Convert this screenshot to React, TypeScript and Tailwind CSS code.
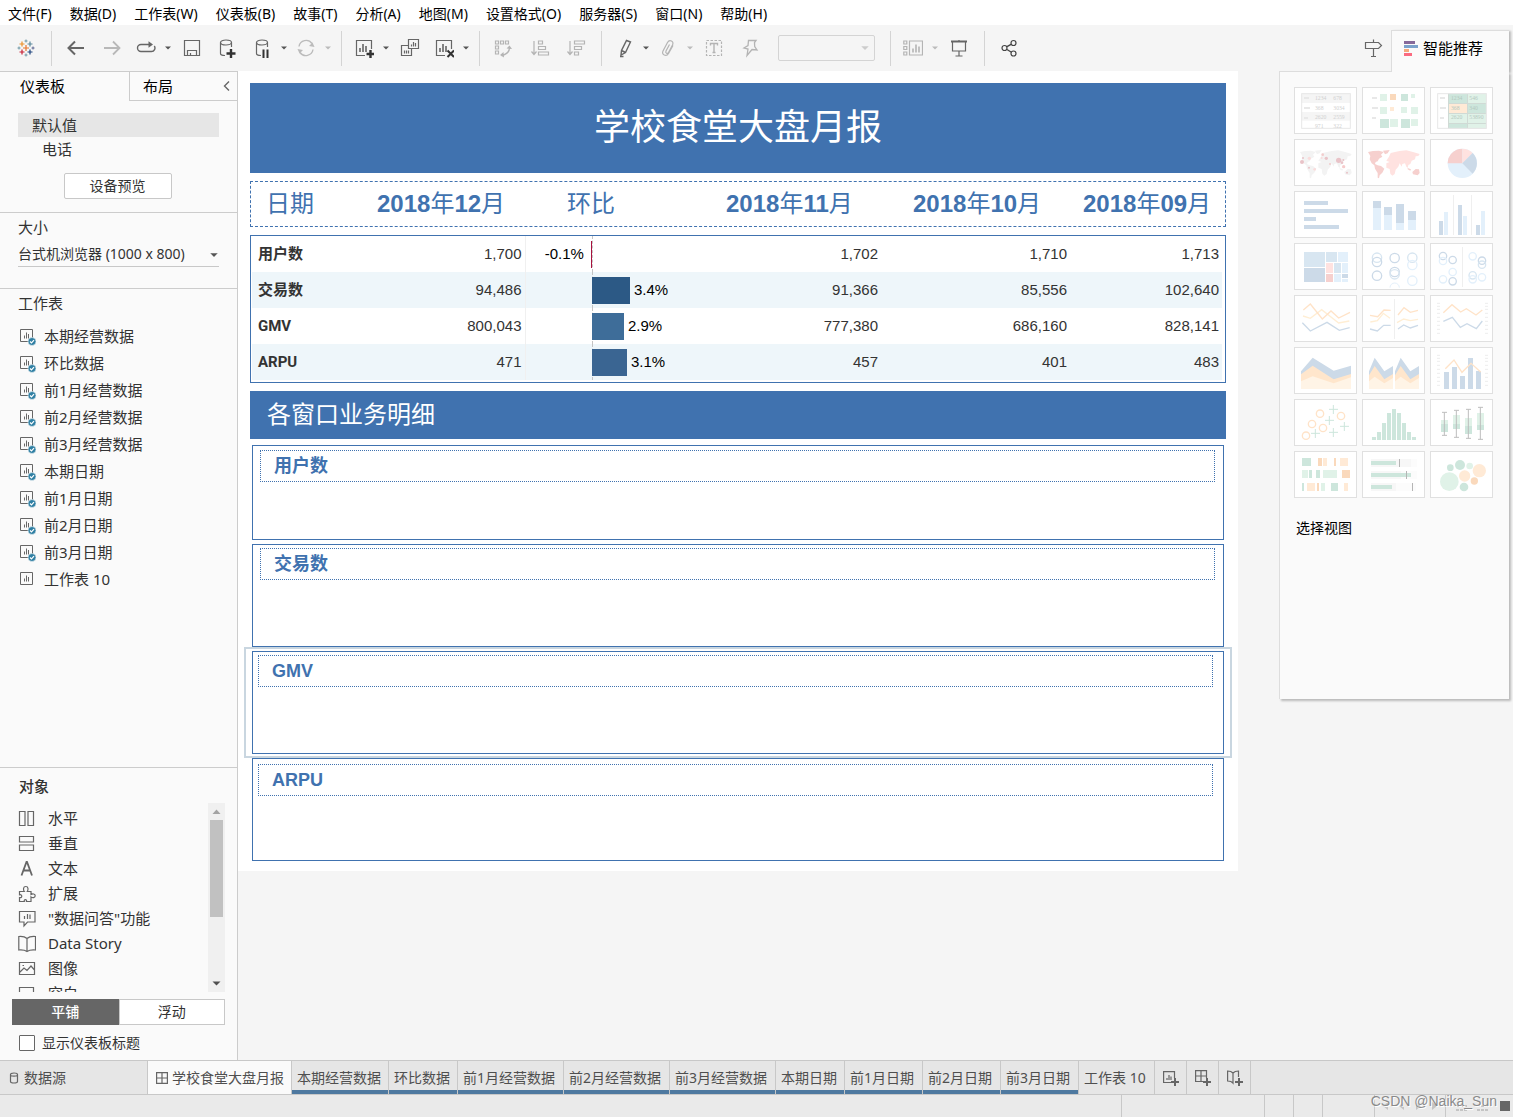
import React, { useState } from 'react';
import type { ReactNode } from 'react';

const MENUS = ['文件(F)', '数据(D)', '工作表(W)', '仪表板(B)', '故事(T)', '分析(A)', '地图(M)', '设置格式(O)', '服务器(S)', '窗口(N)', '帮助(H)'];

const SHEETS = ['本期经营数据', '环比数据', '前1月经营数据', '前2月经营数据', '前3月经营数据', '本期日期', '前1月日期', '前2月日期', '前3月日期', '工作表 10'];

const SHEET_TABS = [
  { name: '本期经营数据', width: 'w-[97px]' },
  { name: '环比数据', width: 'w-[69px]' },
  { name: '前1月经营数据', width: 'w-[106px]' },
  { name: '前2月经营数据', width: 'w-[106px]' },
  { name: '前3月经营数据', width: 'w-[106px]' },
  { name: '本期日期', width: 'w-[69px]' },
  { name: '前1月日期', width: 'w-[78px]' },
  { name: '前2月日期', width: 'w-[78px]' },
  { name: '前3月日期', width: 'w-[78px]' },
];

const ROWS = [
  { label: '用户数', current: '1,700', ratio: -0.1, m1: '1,702', m2: '1,710', m3: '1,713', color: '#a8123e' },
  { label: '交易数', current: '94,486', ratio: 3.4, m1: '91,366', m2: '85,556', m3: '102,640', color: '#2c5985' },
  { label: 'GMV', current: '800,043', ratio: 2.9, m1: '777,380', m2: '686,160', m3: '828,141', color: '#3e6d99' },
  { label: 'ARPU', current: '471', ratio: 3.1, m1: '457', m2: '401', m3: '483', color: '#3a6592' },
];

/* ---------- icons ---------- */

interface IconProps {
  children: ReactNode;
  color?: string;
  size?: string;
  box?: string;
}

function Icon({ children, color = '#666', size = 'w-5 h-5', box = '0 0 20 20' }: IconProps) {
  return (
    <svg viewBox={box} className={`${size} shrink-0`} fill="none" stroke={color} strokeWidth="1.2" aria-hidden="true">
      {children}
    </svg>
  );
}

const Bars = ({ x = 0, y = 0 }) => (
  <path d={`M${x} ${y}v-4M${x + 3} ${y}v-8M${x + 6} ${y}v-6`} strokeWidth="1.6" />
);

const LogoIcon = () => (
  <Icon size="w-6 h-6" box="0 0 24 24">
    <path d="M9 12h6M12 9v6" stroke="#e8762d" strokeWidth="1.2" />
    <path d="M5.5 8h5M8 5.5v5" stroke="#eb912b" strokeWidth="1.2" />
    <path d="M13.5 8h5M16 5.5v5" stroke="#59879b" strokeWidth="1.2" />
    <path d="M5.500 16h5M8 13.500v5" stroke="#c72035" strokeWidth="1.2" />
    <path d="M13.500 16h5M16 13.500v5" stroke="#1f447e" strokeWidth="1.2" />
    <path d="M10.500 5h3M12 3.500v3M10.500 19h3M12 17.500v3M3.500 12h3M5 10.500v3" stroke="#7199a6" strokeWidth="1" />
    <path d="M17.500 12h3M19 10.500v3" stroke="#5c6692" strokeWidth="1" />
  </Icon>
);

const BackIcon = () => <Icon><path d="M2.5 10H18M9 3.500l-6.500 6.500L9 16.500" strokeWidth="2" /></Icon>;
const ForwardIcon = () => <Icon color="#b8b8b8"><path d="M2 10h15.500M11 3.500l6.500 6.500L11 16.500" strokeWidth="1.800" /></Icon>;
const ReplayIcon = () => (
  <Icon>
    <path d="M14 6.500H5a3.500 3.500 0 0 0 0 7H15.500a3.500 3.500 0 0 0 2.800-5.500" strokeWidth="1.400" />
    <path d="M12.500 3.200L17 6.500l-4.500 3.300z" fill="#666" stroke="none" />
  </Icon>
);
const SaveIcon = () => <Icon><path d="M2.500 2.500h15v15h-15zM5.500 17.500v-5h9v5M8.500 17.500v-2.500" /></Icon>;
const DbPath = () => (
  <>
    <ellipse cx="8" cy="4.500" rx="5.500" ry="2.500" />
    <path d="M2.500 4.500v11c0 1.200 2 2 4.500 2M13.500 4.500V9" />
  </>
);
const DbAddIcon = () => <Icon><DbPath /><path d="M8.500 15.500h9M13 11v9" stroke="#333" strokeWidth="2.400" /></Icon>;
const DbPauseIcon = () => (
  <Icon>
    <g transform="translate(2 0)"><DbPath /></g>
    <path d="M11.500 11.500V20M15.500 11.500V20" stroke="#333" strokeWidth="2" />
  </Icon>
);
const RefreshIcon = () => (
  <Icon color="#bbb">
    <path d="M3 8.500a7.200 7.200 0 0 1 13-3M17 11.500a7.200 7.200 0 0 1-13 3" strokeWidth="1.400" />
    <path d="M18.500 9l-5.500-1 3.500-3.500zM1.500 11l5.500 1-3.500 3.500z" fill="#bbb" stroke="none" />
  </Icon>
);
const SheetAddIcon = () => (
  <Icon>
    <path d="M11 17.500H2.500v-15h15V11" /><Bars x={6} y={14} />
    <path d="M12.500 16h8M16.500 12v8" stroke="#333" strokeWidth="2.400" />
  </Icon>
);
const DuplicateIcon = () => (
  <Icon>
    <path d="M8.500 1.500h10v9h-10zM8.500 7.500h-7v10h10v-7" />
    <path d="M11.500 8.500V6.500M13.500 8.500V4M15.500 8.500V5M4.500 15.500v-3M6.500 15.500v-3M8.500 15.500v-3" />
  </Icon>
);
const ClearIcon = () => (
  <Icon>
    <path d="M11 17.500H2.500v-15h15V11" /><Bars x={6} y={14} />
    <path d="M13.500 12.500l6.500 6.500M20 12.500L13.500 19" stroke="#333" strokeWidth="2" />
  </Icon>
);
const SwapIcon = () => (
  <Icon color="#b4b4b4">
    <path d="M1.500 3h3v3h-3zM6.500 3h3v3h-3zM11.500 3h3v3h-3zM1.500 8h3v3h-3zM1.500 13h3v3h-3z" />
    <path d="M15.500 9.500c0 4-3 7-8 8" strokeWidth="1.400" />
    <path d="M12.500 10.500l3-3 2.500 3.500zM9.500 14l-3.500 3 4 2.500z" fill="#b4b4b4" stroke="none" />
  </Icon>
);
const SortAscIcon = () => (
  <Icon color="#b4b4b4">
    <path d="M4 3v13M1.500 13.500L4 16.500l2.500-3M8.500 3h4v3h-4zM8.500 8.500h7v3h-7zM8.500 14h10v3h-10z" />
  </Icon>
);
const SortDescIcon = () => (
  <Icon color="#b4b4b4">
    <path d="M4 3v13M1.500 13.500L4 16.500l2.500-3M8.500 3h10v3h-10zM8.500 8.500h7v3h-7zM8.500 14h4v3h-4z" />
  </Icon>
);
const PenIcon = () => (
  <Icon><path d="M12.500 2.500l4 1.500-5 10.500-4.500 2.500.5-4.500zM7.500 12.500l4 2M6 18.500h3.500" strokeWidth="1.400" /></Icon>
);
const ClipIcon = () => (
  <Icon color="#b4b4b4"><path d="M15 7.500l-4.500 8c-2 3.500-7.500 1.500-5.500-2.500L9.500 4.500c1.800-3.500 7-1.500 5 2.500l-4 7.500c-1 1.800-3.500.8-2.500-1.500L11.500 6.500" /></Icon>
);
const TextIcon = () => (
  <Icon color="#b4b4b4">
    <path d="M2.500 2.500h15v15h-15z" strokeDasharray="2.500 1.500" />
    <path d="M6.500 7.500v-2h7v2M10 5.500v9M8.500 14.500h3" strokeWidth="1.400" />
  </Icon>
);
const PinIcon = () => <Icon color="#b4b4b4"><path d="M8.500 2.500h7.500l-1.500 2 .2 4 2.300 3.500-5-.5L7 17.500l1-6.500-4-1 4-2.500z" strokeWidth="1.300" /></Icon>;
const LayoutIcon = () => (
  <Icon color="#b4b4b4">
    <path d="M.8 3h3v3h-3zM.8 8.500h3v3h-3zM.8 14h3v3h-3zM6.500 3h13v14h-13z" /><Bars x={10} y={14.5} />
  </Icon>
);
const PresentIcon = () => <Icon><path d="M2 3.500h16" strokeWidth="2" /><path d="M3.500 4v9h13V4M10 2v1M10 13v5M6.500 18h7" /></Icon>;
const ShareIcon = () => (
  <Icon color="#444">
    <circle cx="5.500" cy="10" r="2.500" /><circle cx="14.500" cy="5" r="2.500" /><circle cx="14.500" cy="15.500" r="2.500" />
    <path d="M8 8.700l4-2.300M8 11.500l4 2.500" strokeWidth="1.400" />
  </Icon>
);

const Caret = ({ color = '#555', size = 'w-2 h-2' }) => (
  <svg viewBox="0 0 8 8" className={`${size} shrink-0`} aria-hidden="true"><path d="M1 2.500h6L4 5.500z" fill={color} /></svg>
);

const SheetIcon = ({ checked }: { checked: boolean }) => (
  <Icon size="w-[18px] h-[18px]" box="0 0 18 18">
    <path d="M2.500 1.500h12v12h-12zM6.500 10.500V7.500M8.500 10.500V4.500M10.500 10.500V6" strokeWidth="1" />
    {checked && (
      <>
        <circle cx="14" cy="13.500" r="4" fill="#2f7fa3" stroke="#fafafa" strokeWidth=".6" />
        <path d="M12 13.500l1.500 1.500 2.500-2.800" stroke="#fff" strokeWidth="1.200" />
      </>
    )}
  </Icon>
);

const OBJECTS = [
  { name: '水平', icon: <path d="M1.500 1.500h5.500v14H1.500zM10 1.500h5.500v14H10z" /> },
  { name: '垂直', icon: <path d="M1.500 1.500h14V7h-14zM1.500 10h14v5.500h-14z" /> },
  { name: '文本', icon: <path d="M3.500 15.500L8.500 2h.5l5 13.500M5.500 10.500h7" strokeWidth="1.800" /> },
  { name: '扩展', icon: <path d="M1.500 6.500h4.800c-1.200-1.500-1.300-5 1.500-5s2.500 3.500 1.500 5H13v3c1.500-1 4.200-.8 4.200 1.300s-2.700 2.300-4.200 1.200v4.500H8.500c.8-2.500-3-2.500-2.200 0H1.500v-4c3 1 3-3.500 0-2.700z" /> },
  { name: '"数据问答"功能', icon: <path d="M1.500 1.500h15.500v10.500H9.500L6 16V12H1.500zM6.500 9V6M9.500 9V4M12 9V4.500" /> },
  { name: 'Data Story', icon: <path d="M.8 1.500c3.500-.3 6 0 8.200 2 2.200-2 4.700-2.300 8.500-2v13.500c-3.500-.3-6.300 0-8.500 1.500C6.800 15 4.300 14.700.8 15zM9 3.500v13" /> },
  { name: '图像', icon: <path d="M1.500 2.500h15v12h-15zM2 12l4-4 3 2.500 4-4.500 3.500 4M4.500 5.500h1.500" /> },
  { name: '空白', icon: <path d="M1.500 2.500h14v14h-14z" /> },
];

/* ---------- toolbar ---------- */

function Tool({ label, wide, children }: { label: string; wide?: boolean; children: ReactNode }) {
  return (
    <button type="button" aria-label={label} className={`${wide ? 'w-9' : 'w-8'} h-8 shrink-0 flex items-center justify-center`}>
      {children}
    </button>
  );
}

const Drop = ({ label, color }: { label: string; color?: string }) => (
  <button type="button" aria-label={label} className="w-3 h-8 shrink-0 flex items-center justify-center">
    <Caret color={color} />
  </button>
);

const Group = ({ children, last }: { children: ReactNode; last?: boolean }) => (
  <div className={`h-[35px] flex items-center pl-1.5 pr-[7px] ${last ? '' : 'border-r border-[#d4d4d4]'}`}>{children}</div>
);

function Toolbar() {
  return (
    <div className="h-[46px] flex items-center bg-[#f5f5f5] pl-0.5">
      <Group><Tool label="开始" wide><LogoIcon /></Tool></Group>
      <Group>
        <Tool label="撤消" wide><BackIcon /></Tool>
        <Tool label="重做" wide><ForwardIcon /></Tool>
        <Tool label="重播动画"><ReplayIcon /></Tool>
        <Drop label="重播选项" />
        <Tool label="保存" wide><SaveIcon /></Tool>
        <Tool label="新建数据源" wide><DbAddIcon /></Tool>
        <Tool label="暂停自动更新"><DbPauseIcon /></Tool>
        <Drop label="更新选项" />
        <Tool label="运行更新"><RefreshIcon /></Tool>
        <Drop label="刷新选项" color="#bbb" />
      </Group>
      <Group>
        <Tool label="新建工作表"><SheetAddIcon /></Tool>
        <Drop label="新建选项" />
        <Tool label="复制" wide><DuplicateIcon /></Tool>
        <Tool label="清除工作表"><ClearIcon /></Tool>
        <Drop label="清除选项" />
      </Group>
      <Group>
        <Tool label="交换行和列" wide><SwapIcon /></Tool>
        <Tool label="升序排序" wide><SortAscIcon /></Tool>
        <Tool label="降序排序" wide><SortDescIcon /></Tool>
      </Group>
      <Group>
        <Tool label="突出显示"><PenIcon /></Tool>
        <Drop label="突出显示选项" />
        <Tool label="组成员"><ClipIcon /></Tool>
        <Drop label="组选项" color="#bbb" />
        <Tool label="显示标记标签" wide><TextIcon /></Tool>
        <Tool label="固定轴" wide><PinIcon /></Tool>
        <div className="ml-2.5 mr-2 w-[97px] h-[26px] border border-[#d4d4d4] rounded-xs flex items-center pr-1">
          <select aria-label="适合" disabled className="flex-1 min-w-0 appearance-none" />
          <Caret color="#ccc" size="w-2.5 h-2.5" />
        </div>
      </Group>
      <Group>
        <Tool label="显示/隐藏卡"><LayoutIcon /></Tool>
        <Drop label="卡选项" color="#bbb" />
        <Tool label="演示模式" wide><PresentIcon /></Tool>
      </Group>
      <Group last><Tool label="共享" wide><ShareIcon /></Tool></Group>
    </div>
  );
}

/* ---------- left pane ---------- */

function Sidebar() {
  const [tiled, setTiled] = useState(true);
  return (
    <aside className="w-[238px] shrink-0 flex flex-col bg-[#fafafa] border-r border-[#ccc] text-[15px] text-[#333]">
      <div className="h-[30px] flex border-t border-[#ccc] text-black">
        <button type="button" className="w-[129px] pl-5 text-left">仪表板</button>
        <div className="flex-1 flex items-center justify-between border-l border-b border-[#ccc] pl-[13px] pr-1">
          <button type="button">布局</button>
          <button type="button" aria-label="折叠" className="flex">
            <Icon size="w-3 h-3" box="0 0 12 12"><path d="M8 1.500L3.500 6 8 10.500" strokeWidth="1.400" /></Icon>
          </button>
        </div>
      </div>

      <div className="pt-3 pb-[13px] px-[18px] flex flex-col">
        <button type="button" className="h-6 bg-[#e6e6e6] pl-3.5 text-left">默认值</button>
        <button type="button" className="h-6 mb-3 pl-6 text-left">电话</button>
        <button type="button" className="w-[108px] h-[26px] mr-0.5 self-center bg-white border border-[#c8c8c8] rounded-xs text-sm">
          设备预览
        </button>
      </div>

      <div className="border-t border-[#ccc] px-[18px] pb-[21px]">
        <label htmlFor="size" className="block h-[30px] leading-7">大小</label>
        <div className="h-6 flex items-center border-b border-[#c8c8c8] text-sm">
          <select id="size" className="flex-1 min-w-0 h-[22px] pb-0.5 appearance-none bg-transparent">
            <option>台式机浏览器 (1000 x 800)</option>
          </select>
          <Caret size="w-2.5 h-2.5" />
        </div>
      </div>

      <div className="flex-1 border-t border-[#ccc] px-[18px]">
        <h3 className="h-[30px] leading-7">工作表</h3>
        <ul className="mt-1">
          {SHEETS.map((s, i) => (
            <li key={s} className="h-[27px] flex items-center gap-2">
              <SheetIcon checked={i < 9} />
              <span>{s}</span>
            </li>
          ))}
        </ul>
      </div>

      <div className="border-t border-[#ccc] px-3 pb-[9px]">
        <h3 className="h-[35px] leading-[37px] pl-[7px] font-medium">对象</h3>
        <div className="flex h-[189px]">
          <ul className="flex-1 pt-[3px] pl-1.5 overflow-hidden">
            {OBJECTS.map(o => (
              <li key={o.name} className="h-[25px] flex items-center gap-3">
                <Icon size="w-[18px] h-[18px]" box="0 0 18 18">{o.icon}</Icon>
                <span>{o.name}</span>
              </li>
            ))}
          </ul>
          <div className="w-[17px] bg-[#f0f0f0] flex flex-col items-center justify-between py-1">
            <div className="flex flex-col items-center gap-1">
              <svg viewBox="0 0 9 9" className="w-[9px] h-[9px]"><path d="M.5 7h8l-4-4.500z" fill="#a3a3a3" /></svg>
              <div className="w-[13px] h-[97px] bg-[#c1c1c1]" />
            </div>
            <svg viewBox="0 0 9 9" className="w-[9px] h-[9px]"><path d="M.5 2.500h8l-4 4z" fill="#505050" /></svg>
          </div>
        </div>
        <div className="mt-[7px] h-[26px] flex text-sm text-[#333]">
          <button type="button" onClick={() => setTiled(true)} className={`flex-1 border ${tiled ? 'bg-[#666] border-[#666] text-white font-medium' : 'bg-white border-[#c8c8c8]'}`}>平铺</button>
          <button type="button" onClick={() => setTiled(false)} className={`flex-1 border ${tiled ? 'bg-white border-[#c8c8c8]' : 'bg-[#666] border-[#666] text-white font-medium'}`}>浮动</button>
        </div>
        <label className="mt-2.5 h-4 flex items-center gap-[7px] pl-[7px] text-sm">
          <input type="checkbox" className="appearance-none w-4 h-4 bg-white border border-[#666] rounded-[1px] checked:bg-[#666]" />
          显示仪表板标题
        </label>
      </div>
    </aside>
  );
}

/* ---------- dashboard ---------- */

function RatioCell({ ratio, color }: { ratio: number; color: string }) {
  const text = `${ratio.toFixed(1)}%`;
  return (
    <div className="h-9 flex text-black">
      <div className="w-[40%] flex items-center justify-end border-r border-dashed border-[#c4c4c4]">
        {ratio < 0 && (
          <>
            <span className="mr-[7px]">{text}</span>
            <span className="h-[27px]" style={{ width: 1, background: color }} />
          </>
        )}
      </div>
      {ratio > 0 && (
        <div className="flex-1 flex items-center gap-1 -ml-px">
          <span className="h-[27px]" style={{ width: Math.round(ratio * 11.2), background: color }} />
          <span>{text}</span>
        </div>
      )}
    </div>
  );
}

function DetailCard({ title, box, selected }: { title: string; box: string; selected?: boolean }) {
  return (
    <section className={`relative border border-[#4072af] ${box}`}>
      <h3 className="h-8 leading-[30px] border border-dotted border-[#4072af] pl-[13px] text-lg font-bold text-[#4072af]">{title}</h3>
      {selected && <div className="absolute -inset-x-[9px] -inset-y-[5px] border-2 border-[#c9d6e0] pointer-events-none" />}
    </section>
  );
}

function Month({ year, month }: { year: string; month: string }) {
  return (
    <span>
      {year}<span className="font-normal">年</span>{month}<span className="font-normal">月</span>
    </span>
  );
}

function Dashboard() {
  return (
    <div className="w-full max-w-[1000px] bg-white px-3 pt-3 pb-2.5 font-[family-name:'Liberation_Sans','Noto_Sans_CJK_SC',sans-serif]">
      <h1 className="h-[90px] flex items-center justify-center bg-[#4072af] text-white text-4xl">学校食堂大盘月报</h1>

      <div className="mt-2 h-[46px] grid grid-cols-[111fr_190fr_159fr_187fr_170fr_142fr] items-center pl-[15px] border border-dashed border-[#4072af] text-2xl font-bold text-[#4072af] whitespace-nowrap">
        <span className="font-normal">日期</span>
        <Month year="2018" month="12" />
        <span className="font-normal">环比</span>
        <Month year="2018" month="11" />
        <Month year="2018" month="10" />
        <Month year="2018" month="09" />
      </div>

      <div className="mt-2 border border-[#4072af] pb-0.5 pl-px pr-[3px] text-[15px] text-[#333]">
        <table className="w-full table-fixed">
          <colgroup>
            <col className="w-[108px]" />
            <col className="w-[165px]" />
            <col className="w-[169px]" />
            <col className="w-[187px]" />
            <col className="w-[189px]" />
            <col className="w-[152px]" />
          </colgroup>
          <tbody>
            {ROWS.map(r => (
              <tr key={r.label} className="h-9 even:bg-[#eef6fa]">
                <th scope="row" className="pl-1.5 text-left font-bold font-[family-name:Roboto,'Noto_Sans_CJK_SC',sans-serif]">{r.label}</th>
                <td className="pr-[3px] text-right">{r.current}</td>
                <td className="border-l border-[#f0f0f0]"><RatioCell ratio={r.ratio} color={r.color} /></td>
                <td className="pr-[3px] text-right">{r.m1}</td>
                <td className="pr-[3px] text-right">{r.m2}</td>
                <td className="pr-[3px] text-right">{r.m3}</td>
              </tr>
            ))}
          </tbody>
        </table>
      </div>

      <h2 className="mt-2 h-12 leading-[48px] pl-[17px] bg-[#4072af] text-white text-2xl">各窗口业务明细</h2>

      <div className="mt-1.5 mx-0.5 flex flex-col gap-1">
        <DetailCard title="用户数" box="h-[95px] pt-1 pl-[7px] pr-2" />
        <DetailCard title="交易数" box="h-[103px] pt-[3px] pl-[7px] pr-2" />
        <DetailCard title="GMV" box="h-[103px] pt-[3px] pl-[5px] pr-2.5" selected />
        <DetailCard title="ARPU" box="h-[103px] pt-[5px] pl-[5px] pr-2.5" />
      </div>
    </div>
  );
}

/* ---------- show me pane ---------- */

const BLUE = '#ccdae8';
const SKY = '#e3f0fb';
const MIST = '#d8e6f1';
const GREEN = '#cde6dc';
const MINT = '#e0f2e8';
const ORANGE = '#fad9bc';
const PEACH = '#ffead6';
const ROSE = '#f6d0ce';
const PINK = '#ffe2e0';
const GREY = '#e8e8e8';

type Box = [number, number, number, number, string];
type Dot = [number, number, number, string];

const Rects = ({ items }: { items: Box[] }) => (
  <>{items.map(([x, y, w, h, fill], i) => <rect key={i} x={x} y={y} width={w} height={h} fill={fill} />)}</>
);
const Dots = ({ items }: { items: Dot[] }) => (
  <>{items.map(([x, y, r, fill], i) => <circle key={i} cx={x} cy={y} r={r} fill={fill} />)}</>
);
const Rings = ({ items }: { items: Dot[] }) => (
  <>{items.map(([x, y, r, c], i) => <circle key={i} cx={x} cy={y} r={r} fill="none" stroke={c} strokeWidth="4" />)}</>
);
const Line = ({ points, color }: { points: string; color: string }) => (
  <polyline points={points} fill="none" stroke={color} strokeWidth="4" />
);
const Ticks = () => (
  <path d="M18 22h9M18 31h9M18 40h9M18 52h9M18 64h9M18 76h9M18 88h9M18 100h9M18 112h9M162 22h9M162 31h9M162 40h9M162 52h9M162 64h9M162 76h9M162 88h9M162 100h9M162 112h9" stroke="#ededed" strokeWidth="3" />
);
const Figures = ({ rows, color }: { rows: string[][]; color: string }) => (
  <g fontSize="17" fill={color} fontFamily="Liberation Serif, serif">
    {rows.map(([a, b], i) => (
      <React.Fragment key={i}>
        <text x="60" y={37 + i * 28}>{a}</text>
        <text x="115" y={37 + i * 28}>{b}</text>
      </React.Fragment>
    ))}
  </g>
);

const AMERICAS = 'M15 36l15-3 18-1 14 4-8 8 4 6-10 6-4 8-6 2-2 6 8 4 10 2 10 8-6 12-8 8-2 9-4-2v-14l-8-13-2-10-8-6-6-12 2-10zM60 32l20-2-6 10-8 3z';
const EURASIA = 'M78 50l5-11 13-3 14-3 20-2 20 5 20 6-4 6-8 1-2 9-10 4-4 10-6 3-2 9-4-4-4-10-8 2-2 8-6-10 0 0-4 10-8 9-3 13-7 5-6-6-2-14-10-4v-13l10-4-10-4z';
const OCEANIA = 'M148 96l10-9 10 1 2 11-6 7-14-3zM134 84l10 4-2 4-8-4z';

const AREA = (
  <>
    <path d="M18 70l17-41 29 41 26-16v69H18z" fill={BLUE} />
    <path d="M18 82l17-28 29 40 26-16v45H18z" fill="#ffe6cc" />
    <path d="M18 100l17-14 29 20 26-16v33H18z" fill="#fff4e6" />
  </>
);

const THUMBS: { name: string; art: ReactNode }[] = [
  {
    name: '文本表',
    art: (
      <>
        <Rects items={[[19, 16, 148, 29, '#f5f5f5'], [19, 72, 148, 26, '#f5f5f5'], [27, 27, 15, 6, GREY], [27, 57, 18, 6, GREY], [27, 87, 12, 6, GREY]]} />
        <rect x="20" y="17" width="146" height="104" fill="none" stroke={GREY} strokeWidth="3" />
        <Figures rows={[['1234', '678'], ['368', '3034'], ['2620', '2559'], ['971', '322']]} color="#d0d0d0" />
      </>
    ),
  },
  {
    name: '热图',
    art: (
      <Rects items={[
        [27, 27, 15, 6, GREY], [27, 57, 18, 6, GREY], [27, 87, 12, 6, GREY],
        [51, 18, 21, 21, MINT], [81, 18, 18, 18, ORANGE], [114, 18, 21, 21, GREEN], [144, 18, 12, 12, MINT],
        [51, 57, 21, 21, MINT], [81, 57, 12, 12, PEACH], [114, 57, 18, 18, MINT], [144, 57, 21, 21, MINT],
        [51, 93, 27, 27, GREEN], [81, 93, 24, 24, MINT], [114, 93, 27, 27, GREEN], [144, 93, 21, 21, MINT],
      ]} />
    ),
  },
  {
    name: '突出显示表',
    art: (
      <>
        <Rects items={[
          [51, 16, 115, 106, '#d0dad5'], [27, 27, 15, 6, GREY], [27, 57, 18, 6, GREY], [27, 87, 12, 6, GREY],
          [54, 18, 54, 27, GREEN], [111, 18, 54, 27, MINT], [54, 48, 54, 27, PEACH], [111, 48, 54, 27, GREEN],
          [54, 78, 54, 27, MINT], [111, 78, 54, 27, MINT], [54, 108, 54, 12, GREEN], [111, 108, 54, 12, MINT],
        ]} />
        <rect x="20" y="17" width="146" height="104" fill="none" stroke={GREY} strokeWidth="3" />
        <Figures rows={[['1234', '546'], ['368', '340'], ['2620', '53890']]} color="#b4c9bf" />
      </>
    ),
  },
  {
    name: '符号地图',
    art: (
      <>
        <path d={AMERICAS + EURASIA + OCEANIA} fill="#f3f3f3" />
        <Dots items={[
          [21, 66, 6, '#e9c3c8'], [24, 54, 3, '#e9c3c8'], [43, 55, 5, '#fadcdc'], [42, 83, 3, '#e9c3c8'], [59, 88, 4, '#fadcdc'],
          [83, 44, 4, '#f2cccc'], [94, 55, 5, '#e9c3c8'], [80, 54, 3, '#fadcdc'], [131, 61, 8, '#e9c3c8'], [145, 60, 3, '#e9c3c8'],
          [141, 68, 4, '#e9c3c8'], [146, 80, 5, '#f6cccc'], [156, 98, 3, '#e9c3c8'], [105, 72, 3, '#f2cccc'],
        ]} />
      </>
    ),
  },
  {
    name: '填充地图',
    art: (
      <>
        <path d={AMERICAS + OCEANIA} fill={ROSE} />
        <path d={EURASIA} fill={PINK} />
      </>
    ),
  },
  {
    name: '饼图',
    art: (
      <>
        <circle cx="94" cy="70" r="44" fill={SKY} />
        <path d="M94 70H50A44 44 0 0 1 94 26z" fill={ROSE} />
        <path d="M94 70V26a44 44 0 0 1 31 13z" fill={PINK} />
        <path d="M94 70l31-31a44 44 0 0 1 0 62z" fill={BLUE} />
      </>
    ),
  },
  { name: '水平条', art: <Rects items={[[27, 27, 72, 12, BLUE], [27, 51, 132, 12, BLUE], [27, 75, 36, 12, BLUE], [27, 99, 105, 12, BLUE]]} /> },
  {
    name: '堆叠条',
    art: (
      <Rects items={[
        [30, 27, 24, 21, BLUE], [30, 48, 24, 66, SKY], [63, 45, 24, 24, BLUE], [63, 69, 24, 45, SKY],
        [99, 36, 24, 57, BLUE], [99, 93, 24, 21, SKY], [135, 57, 24, 27, BLUE], [135, 84, 24, 30, SKY],
      ]} />
    ),
  },
  {
    name: '并排条',
    art: (
      <Rects items={[
        [24, 87, 12, 42, BLUE], [39, 60, 12, 69, SKY], [66, 9, 3, 120, '#efefef'], [81, 39, 12, 90, BLUE], [96, 72, 12, 57, SKY],
        [120, 9, 3, 120, '#efefef'], [135, 99, 12, 30, BLUE], [150, 57, 12, 72, SKY],
      ]} />
    ),
  },
  {
    name: '树状图',
    art: (
      <Rects items={[
        [27, 24, 63, 45, MIST], [27, 72, 63, 42, BLUE], [93, 24, 33, 30, MIST], [129, 24, 30, 30, SKY], [93, 57, 21, 30, PINK],
        [117, 57, 21, 30, MIST], [141, 57, 18, 30, SKY], [93, 90, 21, 24, ROSE], [117, 90, 21, 24, SKY], [141, 90, 18, 12, BLUE], [141, 105, 18, 9, SKY],
      ]} />
    ),
  },
  {
    name: '圆视图',
    art: (
      <>
        <Rings items={[
          [42, 41, 14, MIST], [42, 54, 14, BLUE], [42, 95, 14, BLUE], [95, 42, 14, BLUE], [95, 84, 14, BLUE], [95, 91, 14, MIST],
          [148, 41, 14, MIST], [148, 63, 14, SKY], [148, 110, 14, SKY],
        ]} />
        <path d="M81 131a14 14 0 0 1 28 0" fill="none" stroke={SKY} strokeWidth="3" />
      </>
    ),
  },
  {
    name: '并排圆',
    art: (
      <>
        <Rings items={[
          [36, 36, 11, BLUE], [36, 51, 11, SKY], [65, 48, 11, BLUE], [65, 84, 11, SKY], [36, 106, 11, SKY], [65, 112, 11, BLUE],
          [125, 37, 11, SKY], [153, 50, 11, BLUE], [153, 62, 11, MIST], [125, 94, 11, MIST], [125, 106, 11, SKY], [153, 100, 11, SKY],
        ]} />
        <Rects items={[[93, 9, 3, 120, '#efefef']]} />
      </>
    ),
  },
  {
    name: '线(连续)',
    art: (
      <>
        <Line points="24,60 46,67 80,41 131,81 163,75" color="#ffeed4" />
        <Line points="25,42 46,24 82,69 108,45 131,66 165,49" color="#ffe3c8" />
        <Line points="22,80 46,105 96,79 133,103 164,95" color={BLUE} />
      </>
    ),
  },
  {
    name: '线(离散)',
    art: (
      <>
        <Line points="22,78 43,74 61,52 81,67" color="#ffeed4" />
        <Line points="21,58 44,62 63,42 83,43" color="#ffe3c8" />
        <Line points="21,99 43,105 62,88 83,88" color={BLUE} />
        <Rects items={[[93, 9, 3, 120, '#efefef']]} />
        <Line points="102,80 122,69 142,74 165,70" color="#ffeed4" />
        <Line points="105,57 123,35 142,49 165,43" color="#ffe3c8" />
        <Line points="105,99 122,87 142,96 165,88" color={BLUE} />
      </>
    ),
  },
  {
    name: '双线',
    art: (
      <>
        <Ticks />
        <Line points="37,50 63,26 89,48 106,38 135,57 154,42" color="#ffe3c8" />
        <Line points="37,76 64,64 88,94 108,83 136,98 154,75" color={BLUE} />
      </>
    ),
  },
  {
    name: '面积图(连续)',
    art: (
      <>
        <path d="M18 70l35-41 63 39 52-15v70H18z" fill={BLUE} />
        <path d="M18 79l35-26 63 41 52-16v45H18z" fill="#ffe6cc" />
        <path d="M18 100l35-15 63 21 52-18v35H18z" fill="#fff4e6" />
      </>
    ),
  },
  { name: '面积图(离散)', art: <>{AREA}<g transform="translate(78 0)">{AREA}</g></> },
  {
    name: '双组合',
    art: (
      <>
        <Ticks />
        <Rects items={[[39, 72, 15, 51, BLUE], [63, 57, 15, 66, BLUE], [87, 84, 15, 39, BLUE], [111, 30, 15, 93, BLUE], [135, 69, 15, 54, BLUE]]} />
        <Line points="43,62 69,36 93,73 120,46 149,72" color="#ffe3c8" />
      </>
    ),
  },
  {
    name: '散点图',
    art: (
      <>
        <Rings items={[[33, 107, 11, '#ffe3c8'], [51, 72, 11, '#ffe3c8'], [75, 41, 11, '#ffe3c8'], [84, 84, 11, '#ffe3c8'], [138, 48, 11, '#ffe3c8']]} />
        <path d="M102 28h27M115 15v27M90 61h27M103 48v27M135 79h27M148 66v27M102 97h27M115 84v27M48 100h27M61 87v27" stroke={GREEN} strokeWidth="3" />
      </>
    ),
  },
  {
    name: '直方图',
    art: <Rects items={[9, 24, 51, 81, 93, 81, 51, 24, 9].map((h, i): Box => [27 + i * 15, 120 - h, 12, h, GREEN])} />,
  },
  {
    name: '盒须图',
    art: (
      <>
        <Rects items={[
          [30, 60, 21, 12, MINT], [30, 72, 21, 24, GREEN], [66, 45, 21, 27, MINT], [66, 72, 21, 15, GREEN],
          [102, 54, 21, 24, MINT], [102, 78, 21, 24, GREEN], [138, 39, 21, 36, MINT], [138, 75, 21, 15, GREEN],
        ]} />
        <path d="M33 37h15M33 106h15M40 37v69M69 31h15M69 112h15M76 31v81M105 28h15M105 115h15M112 28v87M141 22h15M141 118h15M148 22v96" stroke="#bdbdbd" strokeWidth="3" />
      </>
    ),
  },
  {
    name: '甘特图',
    art: (
      <Rects items={[
        [21, 18, 27, 24, GREEN], [69, 18, 12, 24, ORANGE], [84, 18, 12, 24, PEACH], [117, 18, 6, 24, ORANGE], [135, 18, 24, 24, PEACH],
        [21, 54, 18, 24, MINT], [42, 54, 9, 24, GREEN], [63, 54, 12, 24, GREEN], [84, 54, 42, 24, MINT], [141, 54, 24, 24, ORANGE],
        [21, 93, 6, 24, GREEN], [36, 93, 24, 24, PEACH], [66, 93, 6, 24, ORANGE], [78, 93, 12, 24, MINT], [108, 93, 21, 24, GREEN], [147, 93, 12, 24, PEACH],
      ]} />
    ),
  },
  {
    name: '标靶图',
    art: (
      <Rects items={[
        [24, 21, 120, 24, '#f7f7f7'], [144, 21, 18, 24, '#fcfcfc'], [24, 57, 90, 24, '#f7f7f7'], [114, 57, 48, 24, '#fcfcfc'], [24, 93, 75, 24, '#f7f7f7'], [99, 93, 60, 24, '#fcfcfc'],
        [24, 27, 75, 12, GREEN], [24, 63, 120, 12, GREEN], [24, 99, 63, 12, GREEN],
        [108, 21, 3, 24, '#b5b5b5'], [129, 57, 3, 24, '#b5b5b5'], [147, 93, 3, 24, '#b5b5b5'],
      ]} />
    ),
  },
  {
    name: '填充气泡图',
    art: (
      <Dots items={[
        [58, 47, 10, GREEN], [87, 39, 15, GREEN], [116, 42, 10, MINT], [145, 56, 20, PEACH],
        [101, 72, 17, PEACH], [130, 87, 11, ORANGE], [55, 89, 28, MINT], [99, 105, 13, GREEN],
      ]} />
    ),
  },
];

function ShowMe() {
  return (
    <aside className="w-[234px] shrink-0 pr-1 pt-[5px]">
      <div className="flex">
        <div className="flex-1 h-[42px] flex items-center justify-end pr-2 pb-1.5 border-b border-[#ddd]">
          <button type="button" aria-label="数据指南">
            <Icon><path d="M2.500 4.500h13l3 3-3 3h-13zM10.500 1.500v3M10.500 10.500v8M8 18.500h5" /></Icon>
          </button>
        </div>
        <button type="button" className="w-[118px] h-[42px] pb-1.5 pl-[11px] flex items-center gap-1 bg-[#fafafa] border-l border-t border-[#ddd] text-[15px] text-black shadow-[2px_1px_2px_#bbb]">
          <svg viewBox="0 0 16 16" className="w-4 h-4" aria-hidden="true">
            <path d="M1 0h11v3H1z" fill="#86699a" /><path d="M1 4h14v3H1z" fill="#7ba2cc" />
            <path d="M1 8h5v3H1z" fill="#f5a97c" /><path d="M1 12h8v3H1z" fill="#fb6a80" />
          </svg>
          智能推荐
        </button>
      </div>
      {/* relative keeps the pane above the tab's shadow */}
      <div className="relative bg-[#fafafa] border-l border-[#ddd] pl-3.5 pr-4 pt-[15px] pb-[161px] shadow-[2px_2px_2px_#bbb]">
        <div className="grid grid-cols-3 gap-[5px]">
          {THUMBS.map(t => (
            <button key={t.name} type="button" aria-label={t.name} className="h-[47px] bg-white border border-[#e0e0e0]">
              <svg viewBox="0 0 183 135" className="w-full h-full" aria-hidden="true">{t.art}</svg>
            </button>
          ))}
        </div>
        <p className="mt-5 pl-0.5 text-sm leading-5 text-black">选择视图</p>
      </div>
    </aside>
  );
}

/* ---------- bottom ---------- */

function SheetTabs() {
  return (
    <nav className="h-[35px] flex bg-[#e6e6e6] border-y border-[#c8c8c8] text-sm text-[#4f4f4f] whitespace-nowrap">
      <button type="button" className="w-[148px] pl-2 flex items-center gap-1 border-r border-[#c8c8c8]">
        <Icon size="w-3 h-3" box="0 0 12 12"><path d="M2.500 2.500c0-2 7-2 7 0v7c0 2-7 2-7 0zM2.500 3c0 1.500 7 1.500 7 0" /></Icon>
        数据源
      </button>
      <button type="button" className="w-[144px] pl-2 flex items-center gap-1 bg-[#fafafa] border-r border-[#c8c8c8]">
        <Icon size="w-3 h-3" box="0 0 12 12"><path d="M.6 .6h10.800v10.800H.6zM6 .6v10.800M.6 6h10.800" /></Icon>
        学校食堂大盘月报
      </button>
      {SHEET_TABS.map(t => (
        <button key={t.name} type="button" className={`${t.width} shrink-0 border-r border-[#c8c8c8]`}>
          <span className="h-full flex items-center pl-[5px] border-b-4 border-[#4e79a0] pt-1">{t.name}</span>
        </button>
      ))}
      <button type="button" className="w-[76px] pl-[5px] text-left border-r border-[#c8c8c8]">工作表 10</button>
      <button type="button" aria-label="新建工作表" className="w-8 flex items-center justify-center border-r border-[#c8c8c8]">
        <Icon size="w-4 h-4" box="0 0 16 16"><path d="M9 12.500H.600V1.600H11.500V8M4 10V8M6 10V5M8 10V6.500" /><path d="M8 12h8M12 8v8" strokeWidth="2" /></Icon>
      </button>
      <button type="button" aria-label="新建仪表板" className="w-8 flex items-center justify-center border-r border-[#c8c8c8]">
        <Icon size="w-4 h-4" box="0 0 16 16"><path d="M8 11.500H.600V.600H11.500V8M6 .6v10.900M.6 6h10.900" /><path d="M8 12h8M12 8v8" strokeWidth="2" /></Icon>
      </button>
      <button type="button" aria-label="新建故事" className="w-8 flex items-center justify-center border-r border-[#c8c8c8]">
        <Icon size="w-4 h-4" box="0 0 16 16"><path d="M11.500 7V1c-2 0-4 .3-5.500 2C4.500 1.300 2.500 1 .6 1v10c2 0 4 .3 5.400 2V3" /><path d="M8 12h8M12 8v8" strokeWidth="2" /></Icon>
      </button>
    </nav>
  );
}

function StatusBar() {
  return (
    <footer className="relative h-[22px] flex justify-end bg-[#eaeaea]">
      <div className="w-[143px] border-l border-[#c8c8c8]" />
      <div className="w-[29px] border-l border-[#c8c8c8]" />
      <div className="w-[29px] border-l border-[#c8c8c8]" />
      <div className="w-[52px] border-l border-[#c8c8c8]" />
      <div className="w-[71px] border-l border-[#c8c8c8] flex items-center justify-around px-1">
        <svg viewBox="0 0 60 8" className="w-full h-2" fill="#c4c4c4" aria-hidden="true">
          <path d="M8 0v8L3 4zM24 0v8l-5-4zM36 0v8l5-4zM52 0v8l5-4z" />
        </svg>
      </div>
      <div className="w-[68px] border-l border-[#c8c8c8] flex items-center gap-3 pl-2.5">
        <svg viewBox="0 0 32 10" className="w-8 h-2.5" fill="#c4c4c4" aria-hidden="true">
          <path d="M0 4h3v2H0zM4 4h3v2H4zM8 4h3v2H8zM0 8h3v2H0zM4 8h3v2H4zM8 8h3v2H8zM21 4h3v2h-3zM25 4h3v2h-3zM29 4h3v2h-3zM21 8h3v2h-3zM25 8h3v2h-3zM29 8h3v2h-3z" />
        </svg>
        <div className="w-2.5 h-2.5 bg-[#666]" />
      </div>
      <span className="absolute right-4 -top-1 text-sm leading-5 text-[#8a8a8a] font-[family-name:'Liberation_Sans',sans-serif] [text-shadow:1px_1px_0_#fff]">CSDN @Naika_Sun</span>
    </footer>
  );
}

export default function App() {
  return (
    <div className="min-h-screen flex flex-col bg-[#f5f5f5] font-[family-name:'Noto_Sans','Noto_Sans_CJK_SC',sans-serif]">
      <nav className="h-[25px] flex items-center gap-[18px] bg-white px-2 pt-0.5 text-sm text-black whitespace-nowrap">
        {MENUS.map(m => <button key={m} type="button">{m}</button>)}
      </nav>
      <div className="flex-1 flex">
        <div className="flex-1 min-w-0 flex flex-col">
          <Toolbar />
          <div className="flex-1 flex">
            <Sidebar />
            <main className="flex-1 min-w-0">
              <Dashboard />
            </main>
          </div>
        </div>
        <ShowMe />
      </div>
      <SheetTabs />
      <StatusBar />
    </div>
  );
}
